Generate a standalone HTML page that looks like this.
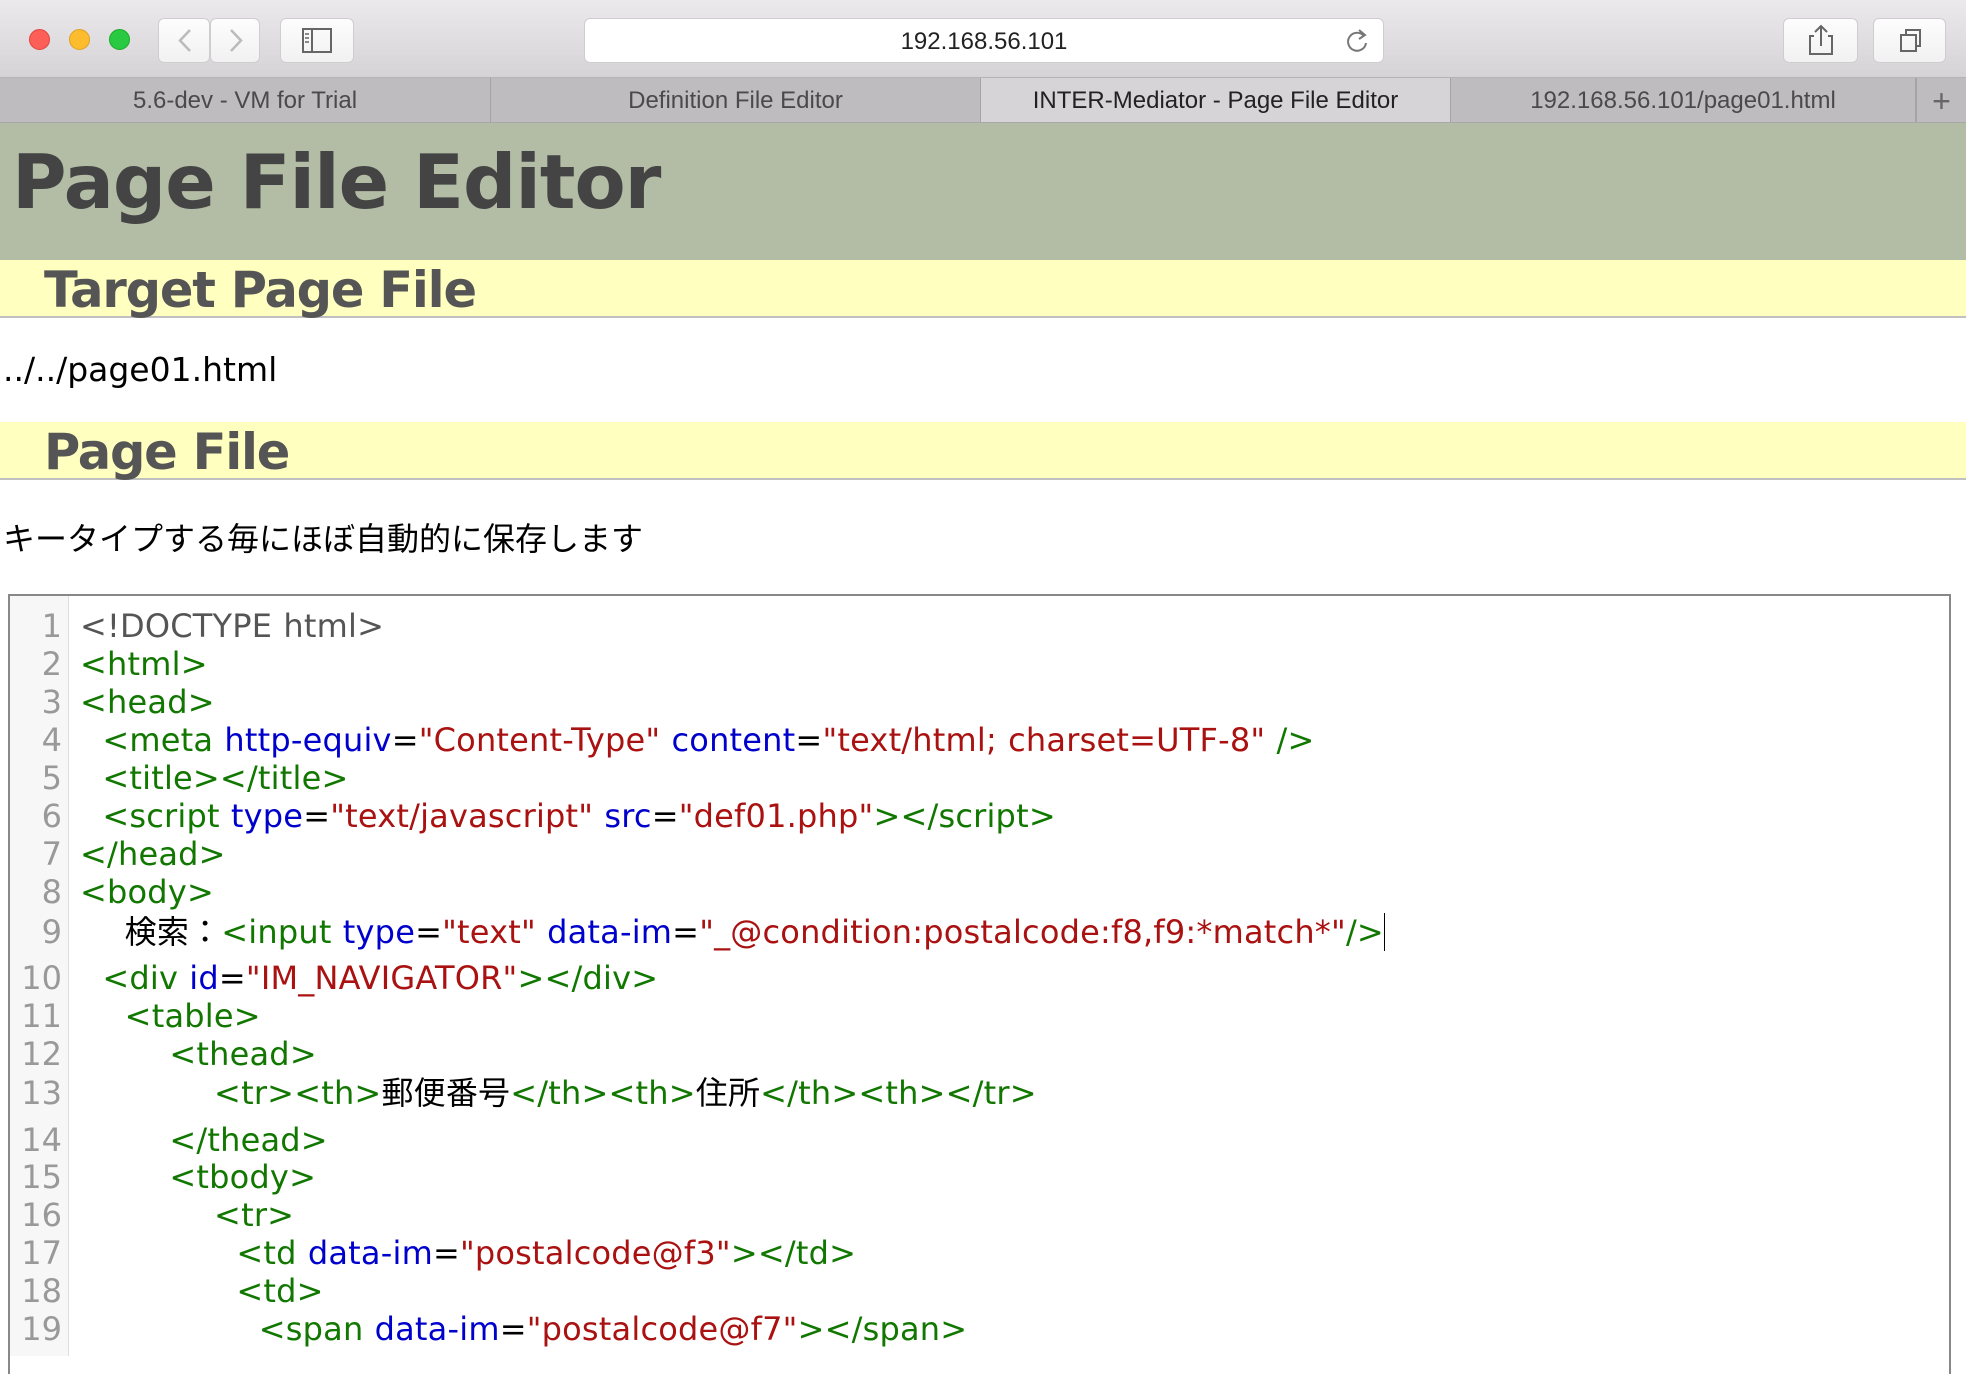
<!DOCTYPE html>
<html><head><meta charset="utf-8"><style>
*{margin:0;padding:0;box-sizing:border-box}
body{width:1966px;height:1356px;overflow:hidden;background:#fff;font-family:"DejaVu Sans","Liberation Sans","Noto Sans CJK JP",sans-serif;position:relative}
.abs{position:absolute}
#bar{left:0;top:0;width:1966px;height:78px;background:linear-gradient(#ebe9eb,#d5d3d5);border-bottom:1px solid #b5b3b5}
.dot{width:21px;height:21px;border-radius:50%;top:29px}
.btn{background:linear-gradient(#fdfdfd,#f1f1f1);border:1px solid #cfcdcf;border-radius:6px;top:18px;height:45px}
#tabs{left:0;top:78px;width:1966px;height:45px;background:#bebcbe;border-bottom:1px solid #a9a7a9}
.tab{top:0;height:44px;border-right:1px solid #a5a3a5;font-family:"Liberation Sans",sans-serif;font-size:24px;color:#4a4a4a;text-align:center;line-height:46px}
#hd{left:0;top:123px;width:1966px;height:137px;background:#b3bca5}
#hd span{position:absolute;left:12px;top:16px;font-weight:bold;font-size:74.5px;color:#444;letter-spacing:-1px}
.yel{left:0;width:1966px;height:58px;background:#ffffc0;border-bottom:2px solid #c0c0c0}
.yel span{position:absolute;left:44px;top:1px;font-weight:bold;font-size:49.5px;color:#555;letter-spacing:-1.2px}
.txt{left:3px;font-size:30px;color:#000;font-family:"DejaVu Sans","Noto Sans CJK JP",sans-serif}
#ed{left:8px;top:594px;width:1943px;height:780px;border:2px solid #888;border-bottom:none;background:#fff}
#gut{left:10px;top:596px;width:59px;height:760px;background:#f7f7f7;border-right:1px solid #ddd}
.ln{left:10px;width:52px;text-align:right;color:#999;font-size:32px;line-height:38px;height:38px}
.cl{left:80px;font-size:32px;line-height:38px;height:38px;white-space:pre;color:#170;letter-spacing:0.2px;word-spacing:0.8px}
.b{color:#00c}.r{color:#a11}.k{color:#000}.g{color:#555}
</style></head><body>
<div id="bar" class="abs"></div>
<div class="abs dot" style="left:29px;background:#fc5f57;border:1px solid #e0443e"></div>
<div class="abs dot" style="left:69px;background:#fdbc2e;border:1px solid #dea123"></div>
<div class="abs dot" style="left:109px;background:#29c941;border:1px solid #1aab29"></div>
<div class="abs btn" style="left:158px;width:52px"></div>
<div class="abs btn" style="left:210px;width:50px"></div>
<svg class="abs" style="left:158px;top:18px" width="102" height="45"><path d="M32 12 L22 22.5 L32 33" stroke="#bbb" stroke-width="2.5" fill="none"/><path d="M73 12 L83 22.5 L73 33" stroke="#bbb" stroke-width="2.5" fill="none"/></svg>
<div class="abs btn" style="left:280px;width:74px"></div>
<svg class="abs" style="left:280px;top:18px" width="74" height="45"><rect x="23" y="11" width="28" height="23" fill="none" stroke="#666" stroke-width="2"/><line x1="32" y1="11" x2="32" y2="34" stroke="#666" stroke-width="2"/><path d="M25 16h4M25 20h4M25 24h4" stroke="#666" stroke-width="1.5"/></svg>
<div class="abs btn" style="left:584px;width:800px;background:#fff;text-align:center;font-family:'Liberation Sans',sans-serif;font-size:24px;line-height:45px;color:#222">192.168.56.101</div>
<svg class="abs" style="left:1342px;top:26px" width="30" height="30"><path d="M22 10 A9 9 0 1 0 24 17" stroke="#777" stroke-width="2" fill="none"/><path d="M17 4 L23 9 L17 13" stroke="#777" stroke-width="2" fill="none"/></svg>
<div class="abs btn" style="left:1783px;width:75px"></div>
<svg class="abs" style="left:1783px;top:18px" width="75" height="45"><path d="M31 18h-4v18h22V18h-4" stroke="#666" stroke-width="2" fill="none"/><path d="M38 28V8M32 14l6-6 6 6" stroke="#666" stroke-width="2" fill="none"/></svg>
<div class="abs btn" style="left:1873px;width:73px"></div>
<svg class="abs" style="left:1873px;top:18px" width="73" height="45"><rect x="28" y="17" width="15" height="16" fill="none" stroke="#666" stroke-width="2"/><path d="M33 17v-5h14v16h-4" stroke="#666" stroke-width="2" fill="none"/></svg>
<div id="tabs" class="abs">
<div class="abs tab" style="left:0;width:491px">5.6-dev - VM for Trial</div>
<div class="abs tab" style="left:491px;width:490px">Definition File Editor</div>
<div class="abs tab" style="left:981px;width:470px;background:#d6d4d6;color:#222">INTER-Mediator - Page File Editor</div>
<div class="abs tab" style="left:1451px;width:465px">192.168.56.101/page01.html</div>
<div class="abs tab" style="left:1916px;width:50px;border:none;border-left:1px solid #a5a3a5;font-size:32px;color:#666">+</div>
</div>
<div id="hd" class="abs"><span>Page File Editor</span></div>
<div class="abs yel" style="top:260px"><span>Target Page File</span></div>
<div class="abs txt" style="top:350px;font-size:33px">../../page01.html</div>
<div class="abs yel" style="top:422px"><span>Page File</span></div>
<div class="abs txt" style="top:514px;font-size:32px">キータイプする毎にほぼ自動的に保存します</div>
<div id="ed" class="abs"></div>
<div id="gut" class="abs"></div>
<div class="abs ln" style="top:607px">1</div><div class="abs cl g" style="top:607px">&lt;!DOCTYPE html&gt;</div>
<div class="abs ln" style="top:645px">2</div><div class="abs cl" style="top:645px">&lt;html&gt;</div>
<div class="abs ln" style="top:683px">3</div><div class="abs cl" style="top:683px">&lt;head&gt;</div>
<div class="abs ln" style="top:721px">4</div><div class="abs cl" style="top:721px">  &lt;meta <span class="b">http-equiv</span><span class="k">=</span><span class="r">"Content-Type"</span> <span class="b">content</span><span class="k">=</span><span class="r">"text/html; charset=UTF-8"</span> /&gt;</div>
<div class="abs ln" style="top:759px">5</div><div class="abs cl" style="top:759px">  &lt;title&gt;&lt;/title&gt;</div>
<div class="abs ln" style="top:797px">6</div><div class="abs cl" style="top:797px">  &lt;script <span class="b">type</span><span class="k">=</span><span class="r">"text/javascript"</span> <span class="b">src</span><span class="k">=</span><span class="r">"def01.php"</span>&gt;&lt;/script&gt;</div>
<div class="abs ln" style="top:835px">7</div><div class="abs cl" style="top:835px">&lt;/head&gt;</div>
<div class="abs ln" style="top:873px">8</div><div class="abs cl" style="top:873px">&lt;body&gt;</div>
<div class="abs ln" style="top:913px">9</div><div class="abs cl" style="top:913px;font-family:'DejaVu Sans','Noto Sans CJK JP',sans-serif"><span class="k">    検索：</span>&lt;input <span class="b">type</span><span class="k">=</span><span class="r">"text"</span> <span class="b">data-im</span><span class="k">=</span><span class="r">"_@condition:postalcode:f8,f9:*match*"</span>/&gt;<span class="k" style="border-left:1px solid #000"></span></div>
<div class="abs ln" style="top:959px">10</div><div class="abs cl" style="top:959px">  &lt;div <span class="b">id</span><span class="k">=</span><span class="r">"IM_NAVIGATOR"</span>&gt;&lt;/div&gt;</div>
<div class="abs ln" style="top:997px">11</div><div class="abs cl" style="top:997px">    &lt;table&gt;</div>
<div class="abs ln" style="top:1035px">12</div><div class="abs cl" style="top:1035px">        &lt;thead&gt;</div>
<div class="abs ln" style="top:1074px">13</div><div class="abs cl" style="top:1074px;font-family:'DejaVu Sans','Noto Sans CJK JP',sans-serif">            &lt;tr&gt;&lt;th&gt;<span class="k">郵便番号</span>&lt;/th&gt;&lt;th&gt;<span class="k">住所</span>&lt;/th&gt;&lt;th&gt;&lt;/tr&gt;</div>
<div class="abs ln" style="top:1121px">14</div><div class="abs cl" style="top:1121px">        &lt;/thead&gt;</div>
<div class="abs ln" style="top:1158px">15</div><div class="abs cl" style="top:1158px">        &lt;tbody&gt;</div>
<div class="abs ln" style="top:1196px">16</div><div class="abs cl" style="top:1196px">            &lt;tr&gt;</div>
<div class="abs ln" style="top:1234px">17</div><div class="abs cl" style="top:1234px">              &lt;td <span class="b">data-im</span><span class="k">=</span><span class="r">"postalcode@f3"</span>&gt;&lt;/td&gt;</div>
<div class="abs ln" style="top:1272px">18</div><div class="abs cl" style="top:1272px">              &lt;td&gt;</div>
<div class="abs ln" style="top:1310px">19</div><div class="abs cl" style="top:1310px">                &lt;span <span class="b">data-im</span><span class="k">=</span><span class="r">"postalcode@f7"</span>&gt;&lt;/span&gt;</div>
</body></html>
